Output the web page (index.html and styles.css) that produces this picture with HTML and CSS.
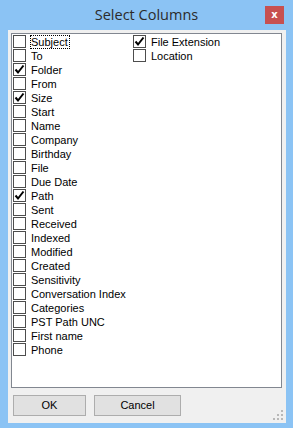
FILE: index.html
```html
<!DOCTYPE html>
<html>
<head>
<meta charset="utf-8">
<link rel="stylesheet" href="styles.css">
</head>
<body>
<div class="window">
  <div class="titlebar">
    <div class="title">Select Columns</div>
    <div class="close">x</div>
  </div>
  <div class="client">
    <div class="listbox">
      <div class="col col1">
        <div class="row"><span class="box"></span><span class="lbl focus">Subject</span></div>
        <div class="row"><span class="box"></span><span class="lbl">To</span></div>
        <div class="row"><span class="box"><svg viewBox="0 0 13 13"><path d="M2.5 6.5 L5 9.5 L10.5 2.5" /></svg></span><span class="lbl">Folder</span></div>
        <div class="row"><span class="box"></span><span class="lbl">From</span></div>
        <div class="row"><span class="box"><svg viewBox="0 0 13 13"><path d="M2.5 6.5 L5 9.5 L10.5 2.5" /></svg></span><span class="lbl">Size</span></div>
        <div class="row"><span class="box"></span><span class="lbl">Start</span></div>
        <div class="row"><span class="box"></span><span class="lbl">Name</span></div>
        <div class="row"><span class="box"></span><span class="lbl">Company</span></div>
        <div class="row"><span class="box"></span><span class="lbl">Birthday</span></div>
        <div class="row"><span class="box"></span><span class="lbl">File</span></div>
        <div class="row"><span class="box"></span><span class="lbl">Due Date</span></div>
        <div class="row"><span class="box"><svg viewBox="0 0 13 13"><path d="M2.5 6.5 L5 9.5 L10.5 2.5" /></svg></span><span class="lbl">Path</span></div>
        <div class="row"><span class="box"></span><span class="lbl">Sent</span></div>
        <div class="row"><span class="box"></span><span class="lbl">Received</span></div>
        <div class="row"><span class="box"></span><span class="lbl">Indexed</span></div>
        <div class="row"><span class="box"></span><span class="lbl">Modified</span></div>
        <div class="row"><span class="box"></span><span class="lbl">Created</span></div>
        <div class="row"><span class="box"></span><span class="lbl">Sensitivity</span></div>
        <div class="row"><span class="box"></span><span class="lbl">Conversation Index</span></div>
        <div class="row"><span class="box"></span><span class="lbl">Categories</span></div>
        <div class="row"><span class="box"></span><span class="lbl">PST Path UNC</span></div>
        <div class="row"><span class="box"></span><span class="lbl">First name</span></div>
        <div class="row"><span class="box"></span><span class="lbl">Phone</span></div>
      </div>
      <div class="col col2">
        <div class="row"><span class="box"><svg viewBox="0 0 13 13"><path d="M2.5 6.5 L5 9.5 L10.5 2.5" /></svg></span><span class="lbl">File Extension</span></div>
        <div class="row"><span class="box"></span><span class="lbl">Location</span></div>
      </div>
    </div>
    <div class="buttons">
      <div class="btn">OK</div>
      <div class="btn">Cancel</div>
    </div>
    <div class="grip">
      <span></span><span></span><span></span>
      <span></span><span></span><span></span>
    </div>
  </div>
</div>
</body>
</html>
```
FILE: styles.css
```css
html, body {
  margin: 0;
  padding: 0;
}
body {
  width: 293px;
  height: 428px;
  overflow: hidden;
  font-family: "Liberation Sans", Arial, sans-serif;
}
.window {
  width: 293px;
  height: 428px;
  background: #8bc3f4;
  display: flex;
  flex-direction: column;
  box-sizing: border-box;
}
.titlebar {
  height: 30px;
  position: relative;
  display: flex;
  align-items: center;
  justify-content: center;
}
.title {
  font-family: "Open Sans", "Noto Sans", sans-serif;
  font-size: 14.5px;
  color: #2b2b2b;
  margin-top: -1px;
}
.close {
  position: absolute;
  left: 265px;
  top: 6px;
  width: 19px;
  height: 18px;
  background: #c75050;
  color: #fff;
  font-family: "DejaVu Sans", sans-serif;
  font-weight: bold;
  font-size: 10px;
  line-height: 17px;
  text-align: center;
}
.client {
  position: relative;
  flex: 1;
  margin: 0 7px 5px 8px;
  background: #f0f0f0;
  padding: 3px 4px 0 3px;
  display: flex;
  flex-direction: column;
}
.listbox {
  height: 355px;
  border: 1px solid #828790;
  background: #fff;
  box-sizing: border-box;
  padding: 1px 1px;
  display: flex;
}
.col {
  display: flex;
  flex-direction: column;
}
.col1 {
  width: 120px;
}
.row {
  height: 14px;
  display: flex;
  align-items: flex-start;
  font-size: 11px;
  color: #000;
}
.box {
  width: 13px;
  height: 13px;
  box-sizing: border-box;
  border: 1px solid #4d4d4d;
  background: #fff;
  margin-right: 4px;
  flex: none;
  position: relative;
}
.box svg {
  position: absolute;
  left: -1px;
  top: -1px;
  width: 13px;
  height: 13px;
}
.box svg path {
  fill: none;
  stroke: #000;
  stroke-width: 2;
}
.lbl {
  border: 1px dotted transparent;
  line-height: 12px;
  height: 12px;
  padding: 0 1px 0 0;
  white-space: nowrap;
}
.lbl.focus {
  border-color: #000;
}
.buttons {
  display: flex;
  gap: 8px;
  margin-top: 7px;
  padding-left: 2px;
}
.btn {
  width: 73px;
  height: 21px;
  box-sizing: border-box;
  background: #e1e1e1;
  border: 1px solid #adadad;
  font-size: 11px;
  line-height: 19px;
  text-align: center;
  color: #000;
}
.btn + .btn {
  width: 87px;
}
.grip {
  position: absolute;
  right: 3px;
  bottom: 3px;
  width: 10px;
  height: 10px;
}
.grip span {
  position: absolute;
  width: 2px;
  height: 2px;
  background: #b8b8b8;
}
.grip span:nth-child(1) { right: 0; top: 0; }
.grip span:nth-child(2) { right: 0; top: 4px; }
.grip span:nth-child(3) { right: 0; top: 8px; }
.grip span:nth-child(4) { right: 4px; top: 4px; }
.grip span:nth-child(5) { right: 4px; top: 8px; }
.grip span:nth-child(6) { right: 8px; top: 8px; }
```
